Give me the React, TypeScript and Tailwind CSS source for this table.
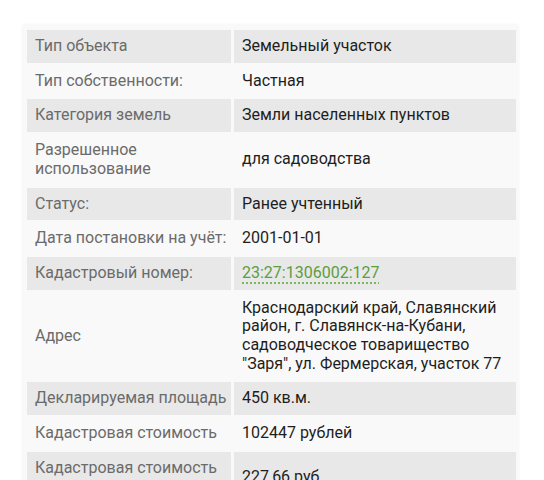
import React from 'react'

type Row = {
  label: string
  value: React.ReactNode
}

const rows: Row[] = [
  { label: 'Тип объекта', value: 'Земельный участок' },
  { label: 'Тип собственности:', value: 'Частная' },
  { label: 'Категория земель', value: 'Земли населенных пунктов' },
  { label: 'Разрешенное использование', value: 'для садоводства' },
  { label: 'Статус:', value: 'Ранее учтенный' },
  { label: 'Дата постановки на учёт:', value: '2001-01-01' },
  {
    label: 'Кадастровый номер:',
    value: (
      <a className="text-[#5c9e3f] underline decoration-dotted decoration-2 underline-offset-[5px] decoration-[#7bb85a]">
        23:27:1306002:127
      </a>
    ),
  },
  {
    label: 'Адрес',
    value:
      'Краснодарский край, Славянский район, г. Славянск-на-Кубани, садоводческое товарищество "Заря", ул. Фермерская, участок 77',
  },
  { label: 'Декларируемая площадь', value: '450 кв.м.' },
  { label: 'Кадастровая стоимость', value: '102447 рублей' },
  { label: 'Кадастровая стоимость за кв.м.', value: '227,66 руб.' },
]

function App() {
  return (
    <div
      className="h-[480px] overflow-hidden bg-white pt-[24px]"
      style={{ fontFamily: 'Roboto, "Liberation Sans", sans-serif' }}
    >
      <div className="ml-[22px] w-[497px] rounded-sm bg-[#f9f9f9] pl-[5px] pr-[3px] pt-[6px] shadow-[0_0_3px_rgba(0,0,0,0.04)]">
        <div className="flex flex-col gap-[2px]">
          {rows.map((row, i) => {
            const odd = i % 2 === 0
            const bg = odd ? 'bg-[#e8e8e8]' : ''
            return (
              <div key={i} className="grid grid-cols-[204px_282px] gap-[3px] text-[16px] leading-[18.7px]">
                <div className={`flex items-center py-[7px] pl-[8px] pr-[1px] text-[#6b6b6b] ${bg}`}>
                  {row.label}
                </div>
                <div className={`flex items-center px-[8px] py-[7px] text-[#1e1e1e] ${bg}`}>
                  <div>{row.value}</div>
                </div>
              </div>
            )
          })}
        </div>
      </div>
    </div>
  )
}

export default App
